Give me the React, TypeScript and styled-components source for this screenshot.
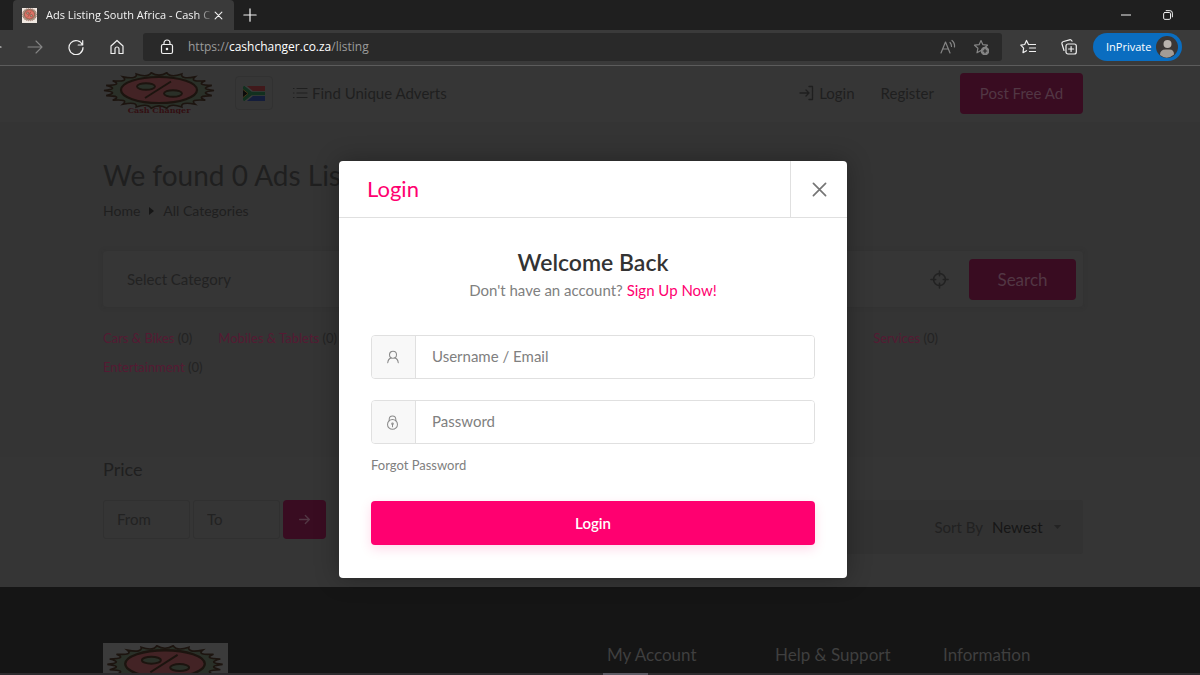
import React from 'react';
import styled, { createGlobalStyle } from 'styled-components';

const Global = createGlobalStyle`
  *, *::before, *::after { box-sizing: border-box; }
  body { margin: 0; background: #343434; overflow: hidden; font-family: Lato, "Noto Sans", sans-serif; }
  h1, h2, h3, p, ul, ol { margin: 0; padding: 0; font-weight: 400; }
  ul, ol { list-style: none; }
  button, input, select { font: inherit; }
  a { color: inherit; text-decoration: none; }
  svg { display: block; flex: none; }
`;

const c = {
  pink: '#ff0070',
  dimPink: '#390c21',
  dimPinkText: '#551a33',
  page: '#343434',
  dimText: '#1f1f1f',
};

const Window = styled.div`
  display: flex;
  flex-direction: column;
  height: 100vh;
`;

/* ---------- browser chrome ---------- */

const Browser = styled.header`
  flex: none;
  background: #3a3a3a;
  border-bottom: 1px solid #5c5c5c;
  font-family: "Open Sans", "Noto Sans", sans-serif;
  color: #f4f4f4;
`;

const TabStrip = styled.div`
  display: flex;
  align-items: center;
  height: 30px;
  padding: 0 24px 0 13px;
  background: #1f1f1f;
`;

const Tab = styled.div`
  display: flex;
  align-items: center;
  align-self: stretch;
  width: 221px;
  padding: 0 8px 0 9px;
  background: #3a3a3a;
  border-radius: 4px 4px 0 0;
`;

const TabTitle = styled.span`
  flex: 1;
  min-width: 0;
  margin-left: 9px;
  white-space: nowrap;
  font-size: 11px;
  line-height: 16px;
  mask-image: linear-gradient(90deg, #000 92%, transparent 102%);
`;

const IconButton = styled.button<{ $size?: number; $dim?: boolean }>`
  display: flex;
  align-items: center;
  justify-content: center;
  flex: none;
  width: ${(p) => p.$size ?? 24}px;
  height: ${(p) => p.$size ?? 24}px;
  padding: 0;
  border: 0;
  background: none;
  color: ${(p) => (p.$dim ? '#858585' : '#f0f0f0')};
`;

const NewTab = styled(IconButton)`
  margin: 0 auto 0 4px;
`;

const WindowButtons = styled.div`
  display: flex;
  gap: 26px;
`;

const Toolbar = styled.div`
  display: flex;
  align-items: center;
  height: 35px;
  padding: 0 18px 2px 0;
`;

const NavButtons = styled.div`
  display: flex;
  gap: 17px;
  margin: 0 14px 0 -18px;
`;

const Address = styled.div`
  display: flex;
  align-items: center;
  flex: 1;
  height: 28px;
  padding: 0 9px 0 12px;
  gap: 9px;
  background: #292929;
  border-radius: 3px;
`;

const Url = styled.span`
  flex: 1;
  font-size: 12px;
  line-height: 18px;
  color: #9b9b9b;
  b { font-weight: 400; color: #fff; }
`;

const ToolButtons = styled.div`
  display: flex;
  gap: 17px;
  margin: 0 12px 0 14px;
`;

const InPrivate = styled.button`
  display: flex;
  align-items: center;
  justify-content: space-between;
  width: 89px;
  height: 28px;
  padding: 0 4px 0 13px;
  border: 0;
  border-radius: 14px;
  background: #0a6dc0;
  color: #fff;
  font-size: 11px;
`;

/* ---------- page behind the dialog ---------- */

const Viewport = styled.div`
  position: relative;
  display: flex;
  flex-direction: column;
  flex: 1;
  min-height: 0;
  overflow: hidden;
  background: ${c.page};
  color: ${c.dimText};
  font-size: 15px;
`;

const Band = styled.section<{ $bg?: string }>`
  flex: none;
  padding-right: 14px;
  background: ${(p) => p.$bg ?? c.page};
`;

const Container = styled.div`
  max-width: 980px;
  margin: 0 auto;
`;

const SiteNav = styled(Container)`
  display: flex;
  align-items: center;
  height: 56px;
  padding-bottom: 2px;
`;

const NavBand = styled(Band)`
  box-shadow: 0 1px 2px #2e2e2e;
`;

const Country = styled.button`
  display: flex;
  align-items: center;
  justify-content: center;
  width: 38px;
  height: 34px;
  margin: 0 19px 0 20px;
  padding: 0;
  border: 1px solid #313131;
  border-radius: 4px;
  background: none;
`;

const NavLink = styled.a`
  display: flex;
  align-items: center;
  gap: 4px;
  line-height: 20px;
`;

const NavRight = styled.div`
  display: flex;
  align-items: center;
  gap: 26px;
  margin-left: auto;
`;

const DimButton = styled.button<{ $w: number; $h: number; $size?: number }>`
  display: flex;
  align-items: center;
  justify-content: center;
  flex: none;
  width: ${(p) => p.$w}px;
  height: ${(p) => p.$h}px;
  padding: 0;
  border: 0;
  border-radius: 4px;
  background: ${c.dimPink};
  color: #523744;
  font-size: ${(p) => p.$size ?? 15}px;
`;

const Heading = styled.h1`
  padding-top: 35px;
  font-size: 28px;
  line-height: 36px;
`;

const Crumbs = styled.ol`
  display: flex;
  align-items: center;
  gap: 9px;
  margin-top: 8px;
  font-size: 14px;
  line-height: 20px;
`;

const SearchBar = styled.form`
  display: flex;
  align-items: center;
  height: 56px;
  margin-top: 30px;
  padding: 0 7px 0 24px;
  border-radius: 4px;
  background: #363636;
  box-shadow: 0 0 4px #313131;
`;

const BareInput = styled.input`
  flex: 1;
  min-width: 0;
  padding: 0;
  border: 0;
  background: none;
  color: ${c.dimText};
  &::placeholder { color: #222; opacity: 1; }
`;

const Locate = styled(IconButton)`
  margin-right: 18px;
  color: #222;
`;

const Categories = styled.ul`
  display: flex;
  flex-wrap: wrap;
  gap: 9px 26px;
  margin-top: 21px;
  padding: 0 145px 80px 0;
  font-size: 13px;
  line-height: 20px;
  color: #232323;
  a { color: ${c.dimPinkText}; }
  li:nth-child(3) { margin-left: auto; }
  li:nth-child(4) { flex-basis: 100%; }
`;

const Results = styled(Container)`
  display: flex;
  justify-content: space-between;
  gap: 30px;
  padding-bottom: 33px;
`;

const PriceFilter = styled.div`
  padding-bottom: 15px;
`;

const PriceTitle = styled.h2`
  font-size: 18px;
  line-height: 24px;
`;

const PriceRow = styled.form`
  display: flex;
  gap: 3px;
  margin-top: 19px;
`;

const PriceInput = styled(BareInput)`
  flex: none;
  width: 87px;
  height: 39px;
  padding: 0 13px 2px;
  border: 1px solid #303030;
  border-radius: 3px;
`;

const SortBar = styled.div`
  display: flex;
  align-items: center;
  justify-content: flex-end;
  flex: 1;
  align-self: flex-end;
  height: 54px;
  padding-right: 22px;
  border-radius: 3px;
  background: #323232;
  label { margin-right: 9px; color: #212121; }
`;

const SortSelect = styled.select`
  width: 58px;
  margin-right: 4px;
  border: 0;
  padding: 0;
  appearance: none;
  background: none;
  color: #161616;
`;

const Footer = styled(Band)`
  flex: 1 0 auto;
  color: #3f3f3f;
`;

const FooterGrid = styled(Container)`
  display: grid;
  grid-template-columns: 504px 168px 168px 1fr;
  padding-top: 56px;
  h3 { font-size: 17px; line-height: 24px; }
`;

const FooterLogo = styled.div`
  width: 125px;
  height: 44px;
  padding: 2px;
  background: #3b3b3b;
`;

const Taskbar = styled.footer`
  display: flex;
  flex: none;
  height: 2px;
  background: #2d2b2e;
  span { width: 45px; margin-left: 603px; background: #5d5b64; }
`;

/* ---------- dialog ---------- */

const Overlay = styled.div`
  position: absolute;
  inset: 0;
  display: flex;
  align-items: center;
  justify-content: center;
  padding-right: 14px;
`;

const Dialog = styled.div`
  width: 100%;
  max-width: 508px;
  border-radius: 4px;
  background: #fff;
  color: #808080;
  box-shadow: 0 0 24px rgba(0, 0, 0, 0.3);
`;

const DialogHead = styled.div`
  display: flex;
  justify-content: space-between;
  height: 57px;
  padding-left: 28px;
  border-bottom: 1px solid #e0e0e0;
`;

const DialogTitle = styled.h2`
  font-size: 22px;
  line-height: 56px;
  color: ${c.pink};
`;

const Close = styled.button`
  display: flex;
  align-items: center;
  justify-content: center;
  width: 57px;
  padding: 0;
  border: 0;
  border-left: 1px solid #e0e0e0;
  background: none;
  color: #757575;
`;

const DialogBody = styled.form`
  display: flex;
  flex-direction: column;
  padding: 28px 32px 33px;
`;

const Welcome = styled.h3`
  font-size: 23px;
  line-height: 32px;
  font-weight: 600;
  text-align: center;
  color: #333;
`;

const SignUp = styled.p`
  margin-bottom: 33px;
  line-height: 24px;
  text-align: center;
  a { color: ${c.pink}; }
`;

const Field = styled.label`
  display: flex;
  height: 44px;
  margin-bottom: 21px;
  border: 1px solid #e0e0e0;
  border-radius: 4px;
  overflow: hidden;
  & + & { margin-bottom: 11px; }
`;

const FieldIcon = styled.span`
  display: flex;
  align-items: center;
  justify-content: center;
  width: 44px;
  padding-right: 2px;
  border-right: 1px solid #e0e0e0;
  background: #f8f8f8;
  color: #8a8a8a;
`;

const FieldInput = styled.input`
  flex: 1;
  min-width: 0;
  padding: 0 16px 2px;
  border: 0;
  outline: 0;
  background: #fff;
  &::placeholder { color: #808080; opacity: 1; }
`;

const Forgot = styled.a`
  align-self: flex-start;
  margin-bottom: 26px;
  font-size: 13px;
  line-height: 20px;
`;

const Submit = styled.button`
  height: 44px;
  border: 0;
  border-radius: 4px;
  background: ${c.pink};
  color: #fff;
  font-weight: 600;
  box-shadow: 0 4px 12px rgba(255, 0, 112, 0.15);
`;

/* ---------- drawings ---------- */

const Ico = ({ s = 16, w = 1.2, children }: { s?: number; w?: number; children: React.ReactNode }) => (
  <svg width={s} height={s} viewBox="0 0 16 16" fill="none" stroke="currentColor" strokeWidth={w} strokeLinecap="round" strokeLinejoin="round" aria-hidden>
    {children}
  </svg>
);

const TEETH = 22;
const seal = (cx: number, cy: number, rx: number, ry: number) => {
  const pt = (t: number, k: number) => `${(cx + Math.cos(t) * rx * k).toFixed(1)} ${(cy + Math.sin(t) * ry * k).toFixed(1)}`;
  const step = (Math.PI * 2) / TEETH;
  let d = `M${pt(0, 1)}`;
  for (let i = 0; i < TEETH; i++) {
    d += `Q${pt((i + 0.5) * step, 0.72)} ${pt((i + 1) * step, 1)}`;
  }
  return `${d}Z`;
};

type Palette = { rim: string; line: string; core: string };
const DIM: Palette = { rim: '#2a3028', line: '#1c140f', core: '#432325' };
const BRIGHT: Palette = { rim: '#a6a08c', line: '#7a3328', core: '#dd7568' };

const Seal = ({ w, h, p, text, square }: { w: number; h: number; p: Palette; text?: boolean; square?: boolean }) => (
  <svg width={w} height={h} viewBox="0 0 112 42" preserveAspectRatio={square ? 'none' : 'xMidYMin meet'} role="img" aria-label="Cash Changer">
    {square && <path d="M0 0h112v42H0z" fill="#f1e9e2" />}
    <path d={seal(56, 18.5, 55, 18)} fill={p.rim} stroke={p.line} strokeWidth="1.600" />
    <ellipse cx="56" cy="18" rx="38" ry="13" fill={p.core} stroke={p.line} strokeWidth="2.200" />
    <g fill="none" stroke={p.line} strokeWidth="1.900">
      <ellipse cx="43" cy="14.500" rx="9" ry="3.300" fill={p.rim} />
      <ellipse cx="70" cy="21.500" rx="9" ry="3.300" fill={p.rim} />
      <path d="M68 9.500 42 26" />
    </g>
    {text && (
      <text x="56" y="41" textAnchor="middle" fontFamily="DejaVu Serif, serif" fontWeight="700" fontSize="8" fill="#330f12">
        Cash Changer
      </text>
    )}
  </svg>
);

const Flag = () => (
  <svg width="22" height="15" viewBox="0 0 22 15" aria-label="South Africa">
    <path d="M0 0h22v7.500H0z" fill="#41191b" />
    <path d="M0 7.500h22V15H0z" fill="#141d3b" />
    <path d="M0 0 9 7.500 0 15M9 7.500h13" fill="none" stroke="#3b3b3b" strokeWidth="5" />
    <path d="M0 2v11l7-5.500z" fill="#0b0b0b" />
    <path d="M0 1 8 7.500 0 14M8 7.500h14" fill="none" stroke="#12301f" strokeWidth="3.500" />
    <path d="M0 3.500 5 7.500l-5 4" fill="none" stroke="#463a18" strokeWidth="1" />
  </svg>
);

const STAR = 'M8 1.500l1.900 4.200 4.600.5-3.400 3.100.9 4.500L8 11.500l-4 2.300.9-4.500L1.500 6.200l4.600-.5z';

const CATEGORIES: [string, number][] = [
  ['Cars & Bikes', 0],
  ['Mobiles & Tablets', 0],
  ['Services', 0],
  ['Entertainment', 0],
];

export default function App() {
  return (
    <Window>
      <Global />
      <Browser>
        <TabStrip>
          <Tab>
            <Seal w={15} h={15} p={BRIGHT} square />
            <TabTitle>Ads Listing South Africa - Cash C</TabTitle>
            <IconButton $size={16} aria-label="Close tab">
              <Ico s={9} w={2}><path d="M2 2l12 12M14 2 2 14" /></Ico>
            </IconButton>
          </Tab>
          <NewTab aria-label="New tab"><Ico s={14} w={1.4}><path d="M8 1v14M1 8h14" /></Ico></NewTab>
          <WindowButtons>
            <IconButton $size={16} aria-label="Minimize"><Ico s={10} w={1.6}><path d="M0 8h16" /></Ico></IconButton>
            <IconButton $size={16} aria-label="Restore">
              <Ico s={10} w={1.6}><rect x="1" y="4" width="11" height="11" rx="2" /><path d="M5 1h6a4 4 0 0 1 4 4v6" /></Ico>
            </IconButton>
          </WindowButtons>
        </TabStrip>
        <Toolbar>
          <NavButtons>
            <IconButton aria-label="Back"><Ico><path d="M15 8H1M7 2 1 8l6 6" /></Ico></IconButton>
            <IconButton $dim aria-label="Forward"><Ico w={1.1}><path d="M1 8h14M9 2l6 6-6 6" /></Ico></IconButton>
            <IconButton aria-label="Refresh"><Ico><path d="M14.500 6A7 7 0 1 0 15 8.500M14.700 1.500V6H10.200" /></Ico></IconButton>
            <IconButton aria-label="Home"><Ico><path d="M2 7l6-5.500L14 7v7.500H10V10a2 2 0 0 0-4 0v4.500H2z" /></Ico></IconButton>
          </NavButtons>
          <Address>
            <IconButton aria-label="Site information">
              <Ico><rect x="2.500" y="5.500" width="11" height="9" rx="1.500" /><path d="M5 5.500V4a3 3 0 0 1 6 0v1.500" /><circle cx="8" cy="10" r=".7" fill="currentColor" /></Ico>
            </IconButton>
            <Url>https://<b>cashchanger.co.za</b>/listing</Url>
            <IconButton $dim aria-label="Read aloud">
              <Ico><path d="M1 14 5.500 3 10 14M2.500 10h6M10 3.500q1.500 1.500 1.500 4M12 1.500Q15 4 14.500 8" /></Ico>
            </IconButton>
            <IconButton $dim aria-label="Add to favorites">
              <Ico><path d={STAR} /><circle cx="12" cy="12" r="3.700" fill="currentColor" /><path d="M12 10.300v3.400M10.300 12h3.400" stroke="#292929" /></Ico>
            </IconButton>
          </Address>
          <ToolButtons>
            <IconButton aria-label="Favorites">
              <Ico><path d="M8.500 5.500 6.500 1.500 4.700 5.500.8 6.200l2.800 3-.6 4.500 3.500-2M9.500 5.500h6M9.500 9h6M9.500 12.500h6" /></Ico>
            </IconButton>
            <IconButton aria-label="Collections">
              <Ico><rect x="5" y="5" width="10.300" height="10" rx="2" /><path d="M10.100 7.500v5M7.600 10h5M3 11.500 1 5a2 2 0 0 1 1.500-2.500l6-1.700a2 2 0 0 1 2.500 1.400" /></Ico>
            </IconButton>
          </ToolButtons>
          <InPrivate>
            InPrivate
            <svg width="22" height="22" viewBox="0 0 22 22" aria-hidden>
              <circle cx="11" cy="11" r="11" fill="#3a3635" />
              <circle cx="11.500" cy="8" r="4" fill="#b9b3ae" />
              <path d="M4 19q0-5.500 5.500-5.500h4q4.500 0 4.500 5-7 6-14 .5z" fill="#a39c96" />
            </svg>
          </InPrivate>
        </Toolbar>
      </Browser>

      <Viewport>
        <NavBand $bg="#363636">
          <SiteNav as="nav">
            <Seal w={112} h={42} p={DIM} text />
            <Country aria-label="South Africa"><Flag /></Country>
            <NavLink href="#adverts">
              <Ico w={1.2}><path d="M5 3.500h10M5 8h10M5 12.500h10M1.500 3.500h.5M1.500 8h.5M1.500 12.500h.5" /></Ico>
              Find Unique Adverts
            </NavLink>
            <NavRight>
              <NavLink href="#login">
                <Ico w={1.3}><path d="M1 8h9M7 5l3 3-3 3M10 1.500h3.500v13H10" /></Ico>
                Login
              </NavLink>
              <NavLink href="#register">Register</NavLink>
              <DimButton $w={123} $h={41}>Post Free Ad</DimButton>
            </NavRight>
          </SiteNav>
        </NavBand>

        <Band>
          <Container>
            <Heading>We found 0 Ads Lis</Heading>
            <Crumbs>
              <li><a href="#home">Home</a></li>
              <li><svg width="5" height="8" viewBox="0 0 5 8" fill="#161616" aria-hidden><path d="M0 0l5 4-5 4z" /></svg></li>
              <li>All Categories</li>
            </Crumbs>
            <SearchBar>
              <BareInput aria-label="Category" placeholder="Select Category" />
              <Locate type="button" aria-label="Use my location">
                <Ico s={19} w={1.3}><circle cx="8" cy="8" r="5" /><path d="M8 .8v4M8 11.200v4M.8 8h4M11.200 8h4" /></Ico>
              </Locate>
              <DimButton type="button" $w={107} $h={41} $size={17}>Search</DimButton>
            </SearchBar>
            <Categories>
              {CATEGORIES.map(([name, n]) => (
                <li key={name}><a href="#category">{name}</a> ({n})</li>
              ))}
            </Categories>
          </Container>
        </Band>

        <Band $bg="#353535">
          <Results>
            <PriceFilter>
              <PriceTitle>Price</PriceTitle>
              <PriceRow>
                <PriceInput aria-label="Price from" placeholder="From" />
                <PriceInput aria-label="Price to" placeholder="To" />
                <DimButton type="button" $w={43} $h={39} aria-label="Apply price"><Ico s={13} w={1.6}><path d="M2 8h12M9 3l5 5-5 5" /></Ico></DimButton>
              </PriceRow>
            </PriceFilter>
            <SortBar>
              <label htmlFor="sort">Sort By</label>
              <SortSelect id="sort"><option>Newest</option></SortSelect>
              <svg width="7" height="4" viewBox="0 0 7 4" fill="#232323" aria-hidden><path d="M0 0h7L3.500 4z" /></svg>
            </SortBar>
          </Results>
        </Band>

        <Footer as="footer" $bg="#151515">
          <FooterGrid>
            <FooterLogo><Seal w={120} h={44} p={DIM} /></FooterLogo>
            <h3>My Account</h3>
            <h3>Help &amp; Support</h3>
            <h3>Information</h3>
          </FooterGrid>
        </Footer>

        <Overlay>
          <Dialog role="dialog" aria-modal="true" aria-labelledby="login-title">
            <DialogHead>
              <DialogTitle id="login-title">Login</DialogTitle>
              <Close aria-label="Close"><Ico s={15} w={1.8}><path d="M1.500 1.500l13 13M14.500 1.500l-13 13" /></Ico></Close>
            </DialogHead>
            <DialogBody>
              <Welcome>Welcome Back</Welcome>
              <SignUp>Don't have an account? <a href="#signup">Sign Up Now!</a></SignUp>
              <Field>
                <FieldIcon>
                  <Ico s={14}><circle cx="8" cy="5.500" r="4" /><path d="M2 14.500Q2.500 10 6 9M14 14.500Q13.500 10 10 9" /></Ico>
                </FieldIcon>
                <FieldInput aria-label="Username / Email" placeholder="Username / Email" />
              </Field>
              <Field>
                <FieldIcon>
                  <Ico s={15} w={1.1}><circle cx="8" cy="10" r="5.300" /><path d="M4.500 6V4.500a3.500 3.500 0 0 1 7 0V6M8 10v2.500" /><circle cx="8" cy="9.300" r=".8" /></Ico>
                </FieldIcon>
                <FieldInput type="password" aria-label="Password" placeholder="Password" />
              </Field>
              <Forgot href="#forgot">Forgot Password</Forgot>
              <Submit type="button">Login</Submit>
            </DialogBody>
          </Dialog>
        </Overlay>
      </Viewport>
      <Taskbar><span /></Taskbar>
    </Window>
  );
}
